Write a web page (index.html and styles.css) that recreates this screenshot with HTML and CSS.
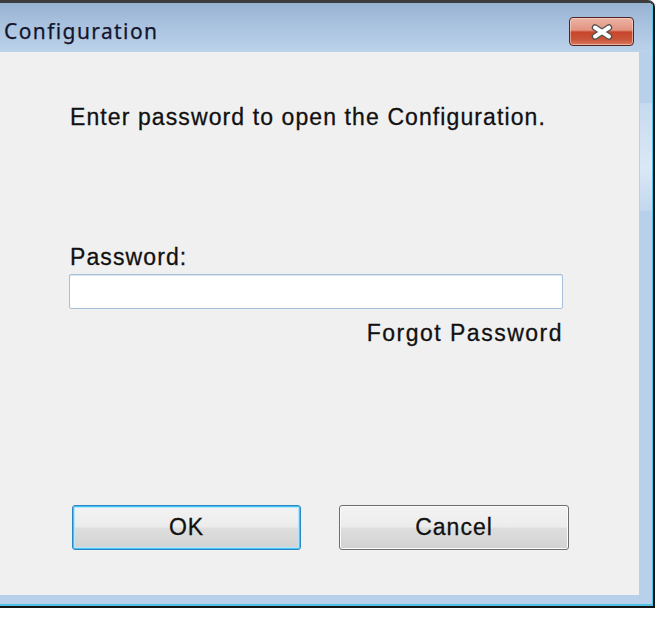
FILE: index.html
```html
<!DOCTYPE html>
<html>
<head>
<meta charset="utf-8">
<link rel="stylesheet" href="styles.css">
</head>
<body>
<div class="window">
  <div class="chrome">
    <div class="titlebar">
      <span class="title">Configuration</span>
      <button class="close" type="button" aria-label="Close">
        <svg width="24" height="16" viewBox="0 0 24 16">
          <path d="M5 3.5 L19 12.5 M19 3.5 L5 12.5" stroke="#505050" stroke-width="6.5" stroke-linecap="round" fill="none"/>
          <path d="M5 3.5 L19 12.5 M19 3.5 L5 12.5" stroke="#ffffff" stroke-width="4" stroke-linecap="round" fill="none"/>
        </svg>
      </button>
    </div>
    <div class="client">
      <p class="prompt">Enter password to open the Configuration.</p>
      <label class="label">Password:</label>
      <input class="field" type="password">
      <span class="forgot">Forgot Password</span>
      <div class="buttons">
        <button class="btn ok" type="button">OK</button>
        <button class="btn cancel" type="button">Cancel</button>
      </div>
    </div>
  </div>
</div>
</body>
</html>
```
FILE: styles.css
```css
html, body {
  margin: 0;
  padding: 0;
  background: #ffffff;
}

.window {
  width: 655px;
  box-sizing: border-box;
  border-top: 3px solid #3c3c3c;
  border-right: 2px solid #151515;
  border-bottom: 2px solid #151515;
  border-top-right-radius: 7px;
  overflow: hidden;
}

.chrome {
  display: flex;
  flex-direction: column;
  border-right: 1px solid #4fc4e4;
  border-bottom: 2px solid #4fc4e4;
  background:
    linear-gradient(to bottom, #c6daef, #dbe8f6 60%, #c2d7ee) right 0 top 100px / 12px 108px no-repeat,
    #b9d0ea;
}

.titlebar {
  height: 49px;
  display: flex;
  align-items: flex-start;
  justify-content: space-between;
  background: linear-gradient(to bottom, #98b2d2 0%, #a9c2df 45%, #bcd2eb 100%);
}

.title {
  margin: 14px 0 0 4px;
  font-family: "Noto Sans", "Open Sans", sans-serif;
  font-size: 21px;
  line-height: 28px;
  letter-spacing: 1.4px;
  color: #14142c;
  -webkit-text-stroke: 0.25px #14142c;
}

.close {
  margin: 14px 18px 0 0;
  width: 65px;
  height: 29px;
  padding: 0;
  border: 1px solid #4e2424;
  border-radius: 4px;
  box-shadow: inset 0 0 0 1px rgba(255, 220, 210, 0.55);
  background: linear-gradient(to bottom, #ecb4a6 0%, #e2937f 45%, #c8452b 52%, #c9553a 80%, #d97a5e 100%);
  display: flex;
  align-items: center;
  justify-content: center;
}

.close svg {
  display: block;
}

.client {
  width: 639px;
  height: 543px;
  margin-bottom: 9px;
  box-sizing: border-box;
  padding: 52px 76px 45px 69px;
  background: #f0f0f0;
  display: flex;
  flex-direction: column;
  align-items: flex-start;
  font-family: "Liberation Sans", Arial, sans-serif;
  font-size: 23px;
  line-height: 26px;
  letter-spacing: 1.1px;
  color: #111111;
  -webkit-text-stroke: 0.3px #111111;
}

.prompt {
  margin: 0 0 0 1px;
}

.label {
  margin: 114px 0 0 1px;
}

.field {
  margin-top: 4px;
  width: 494px;
  height: 35px;
  box-sizing: border-box;
  border: 1px solid #a6c0d9;
  border-radius: 2px;
  box-shadow: inset 0 1px 0 #dbe6f0;
  background: #ffffff;
}

.forgot {
  align-self: flex-end;
  margin-top: 11px;
  letter-spacing: 1.5px;
}

.buttons {
  margin-top: auto;
  margin-left: 3px;
  display: flex;
  gap: 38px;
}

.btn {
  width: 229px;
  height: 45px;
  box-sizing: border-box;
  padding: 0;
  border-radius: 3px;
  font-family: "Liberation Sans", Arial, sans-serif;
  font-size: 23px;
  letter-spacing: 1px;
  color: #111111;
  -webkit-text-stroke: 0.3px #111111;
  background: linear-gradient(to bottom, #f3f3f3 0%, #ececec 48%, #dedede 52%, #d2d2d2 100%);
}

.ok {
  border: 1px solid #2c86c6;
  box-shadow: inset 0 0 0 1px #47c3f0, inset 0 0 0 2px #b6e6fa;
}

.cancel {
  width: 230px;
  border: 1px solid #6f6f6f;
  box-shadow: inset 0 0 0 1px #fbfbfb;
}
```
